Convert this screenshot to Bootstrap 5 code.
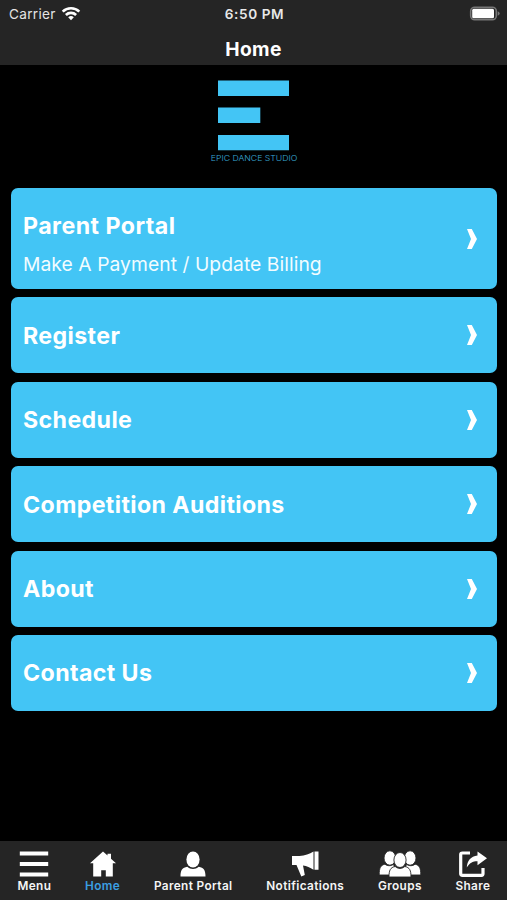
<!DOCTYPE html>
<html lang="en">
<head>
<meta charset="utf-8">
<meta name="viewport" content="width=device-width, initial-scale=1">
<title>Home</title>
<link href="https://cdn.jsdelivr.net/npm/bootstrap@5.3.0/dist/css/bootstrap.min.css" rel="stylesheet">
<style>
body{font-family:Inter,"Liberation Sans",sans-serif;background:#000;color:#fff;height:900px;overflow:hidden}
.bar-bg{background:#252525}
.top-bar{height:65px}
.status-row{height:28px;font-size:13.6px;line-height:28px;padding:0 7px 0 9px;color:#e4e4e4}
.status-row>div{flex:1 1 0}
.carrier{letter-spacing:.32px}
.wifi{margin-left:5px}
.clock{font-weight:600;letter-spacing:.6px;color:#e8e8e8}
.page-title{font-size:19.2px;font-weight:700;line-height:24px;margin-top:9px;letter-spacing:.4px}
.brand-area{height:123px;padding-top:15px}
.menu-list{gap:8.4px;padding:0 10.5px 0 11px}
.menu-tile{background:#43c5f5;color:#fff;border-radius:7px;height:76px;padding:0 19.5px 0 12px;text-decoration:none}
.menu-tile.tall{height:101px}
.tile-title{font-size:23.2px;font-weight:700;line-height:28px;letter-spacing:.38px;padding-top:1px}
.tall .tile-title{padding-top:2px;letter-spacing:.45px}
.tile-sub{font-size:19.3px;line-height:24px;margin-top:12px;letter-spacing:.05px;color:#f2fcff}
.tab-bar{height:59px;padding:9px 16.5px 0 17.5px;font-size:11.8px;font-weight:600;line-height:14px;letter-spacing:.38px}
.tab-bar a{color:#f5f5f5;text-decoration:none}
.tab-bar a.current{color:#3b9fe2}
.tab-bar svg{display:block;margin-bottom:1px;color:#fff}
</style>
</head>
<body class="d-flex flex-column">
<header class="bar-bg top-bar flex-shrink-0">
  <div class="status-row d-flex align-items-center">
    <div class="d-flex align-items-center"><span class="carrier">Carrier</span>
      <svg class="wifi" width="20" height="16" viewBox="1 0 20 16" fill="none" stroke="#fff" stroke-width="2.700"><path d="M2.700 5.600a12 12 0 0 1 16.600 0M5.900 8.900a7.400 7.400 0 0 1 10.200 0"/><path d="M11 14.200l-2.800-2.900a4 4 0 0 1 5.600 0z" fill="#fff" stroke="none"/></svg>
    </div>
    <span class="clock">6:50 PM</span>
    <div class="d-flex justify-content-end"><svg width="31" height="16" viewBox="0 0 31 16"><rect x="1.700" y="1.200" width="25.600" height="12.600" rx="4" fill="none" stroke="#777" stroke-width="1.600"/><rect x="3.200" y="2.800" width="21.800" height="9.400" rx="1.500" fill="#fff"/><path d="M28.700 5.300q2 .7 2 2.200t-2 2.200z" fill="#777"/></svg></div>
  </div>
  <h1 class="page-title text-center mb-0">Home</h1>
</header>
<main class="flex-grow-1">
  <div class="brand-area d-flex justify-content-center">
    <svg width="90" height="84" viewBox="209 80 90 84" role="img" aria-label="Epic Dance Studio"><g fill="#43c5f5"><path d="M218 80.500h71V96h-71zM218 107.500h42.300V123H218zM218 135h71v15.300h-71z"/><text x="210.800" y="160.500" font-family="Inter,sans-serif" font-size="7.800" font-weight="300" textLength="86.500" lengthAdjust="spacingAndGlyphs" opacity=".85">EPIC DANCE STUDIO</text></g></svg>
  </div>
  <nav class="menu-list d-flex flex-column">
    <a href="#" class="menu-tile tall d-flex align-items-center justify-content-between"><div class="pt-2"><div class="tile-title">Parent Portal</div><div class="tile-sub">Make A Payment / Update Billing</div></div><svg width="10" height="20" viewBox="0 0 10 20" fill="#fff"><path d="M0 0h4.800L10 10 4.800 20H0l4-10z"/></svg></a>
    <a href="#" class="menu-tile d-flex align-items-center justify-content-between"><span class="tile-title">Register</span><svg width="10" height="20" viewBox="0 0 10 20" fill="#fff"><path d="M0 0h4.800L10 10 4.800 20H0l4-10z"/></svg></a>
    <a href="#" class="menu-tile d-flex align-items-center justify-content-between"><span class="tile-title">Schedule</span><svg width="10" height="20" viewBox="0 0 10 20" fill="#fff"><path d="M0 0h4.800L10 10 4.800 20H0l4-10z"/></svg></a>
    <a href="#" class="menu-tile d-flex align-items-center justify-content-between"><span class="tile-title">Competition Auditions</span><svg width="10" height="20" viewBox="0 0 10 20" fill="#fff"><path d="M0 0h4.800L10 10 4.800 20H0l4-10z"/></svg></a>
    <a href="#" class="menu-tile d-flex align-items-center justify-content-between"><span class="tile-title">About</span><svg width="10" height="20" viewBox="0 0 10 20" fill="#fff"><path d="M0 0h4.800L10 10 4.800 20H0l4-10z"/></svg></a>
    <a href="#" class="menu-tile d-flex align-items-center justify-content-between"><span class="tile-title">Contact Us</span><svg width="10" height="20" viewBox="0 0 10 20" fill="#fff"><path d="M0 0h4.800L10 10 4.800 20H0l4-10z"/></svg></a>
  </nav>
</main>
<footer class="bar-bg tab-bar d-flex justify-content-between flex-shrink-0">
  <a href="#" class="d-flex flex-column align-items-center"><svg width="30" height="28" viewBox="0 0 30 28" fill="currentColor"><path d="M.8 1.500h28.400v4H.8zM.8 12h28.400v4H.8zM.8 22.500h28.400v4H.8z"/></svg>Menu</a>
  <a href="#" class="current d-flex flex-column align-items-center"><svg width="26" height="28" viewBox="0 0 26 28" fill="currentColor"><path d="M13 1.500l4.500 4V3.800H21v5l5 4.500h-3.200V26.500h-7v-6.200h-4.600v6.200H3.200V13.300H0z"/></svg>Home</a>
  <a href="#" class="d-flex flex-column align-items-center"><svg width="26" height="28" viewBox="0 0 26 28" fill="currentColor"><ellipse cx="13" cy="9.500" rx="6.600" ry="8"/><path d="M.5 26.500c0-6.500 1.800-9 6.800-9.800 3.300 3 8.100 3 11.400 0 5 .8 6.800 3.300 6.800 9.800z"/></svg>Parent Portal</a>
  <a href="#" class="d-flex flex-column align-items-center"><svg width="28" height="28" viewBox="0 0 28 28" fill="currentColor"><path d="M1 6h7.500C14 5.800 18.500 4 22.500 1.500v18.300c-3.400-2.300-6.700-3.700-10.500-4.200l1.800 9.300-3.500 1.600L5.500 15H1zM23.500 1.500h4v18.300h-4z"/></svg>Notifications</a>
  <a href="#" class="d-flex flex-column align-items-center"><svg width="42" height="28" viewBox="-1 0 42 28" fill="currentColor"><g stroke="#252525" stroke-width=".9"><ellipse cx="9.900" cy="8" rx="5.900" ry="7.200"/><path d="M-.8 25c0-7 1.200-9.800 5.700-10.800 2.800 2 6.100 2 8.600 0L17 25z"/><ellipse cx="30.100" cy="8" rx="5.900" ry="7.200"/><path d="M40.800 25c0-7-1.200-9.800-5.700-10.800-2.800 2-6.100 2-8.600 0L23 25z"/><ellipse cx="20" cy="10" rx="6.100" ry="7.500"/><path d="M9 27c0-6.600 1.200-9.500 6.200-10.500 2.700 2.500 6.900 2.500 9.600 0 5 1 6.200 3.900 6.200 10.500z"/></g></svg>Groups</a>
  <a href="#" class="d-flex flex-column align-items-center"><svg width="28" height="28" viewBox="0 0 28 28" fill="currentColor"><path d="M11 3H3.500Q1.700 3 1.700 4.500v19.300q0 1.500 1.800 1.500h19q1.500 0 1.500-1.500V18" fill="none" stroke="currentColor" stroke-width="3.200"/><path d="M18.500 1.500L28 8.300l-9.500 7v-4.100c-5 0-8 1.800-10.700 6.200.3-6.500 3.900-11.200 10.700-12z"/></svg>Share</a>
</footer>
<script src="https://cdn.jsdelivr.net/npm/bootstrap@5.3.0/dist/js/bootstrap.bundle.min.js"></script>
</body>
</html>
